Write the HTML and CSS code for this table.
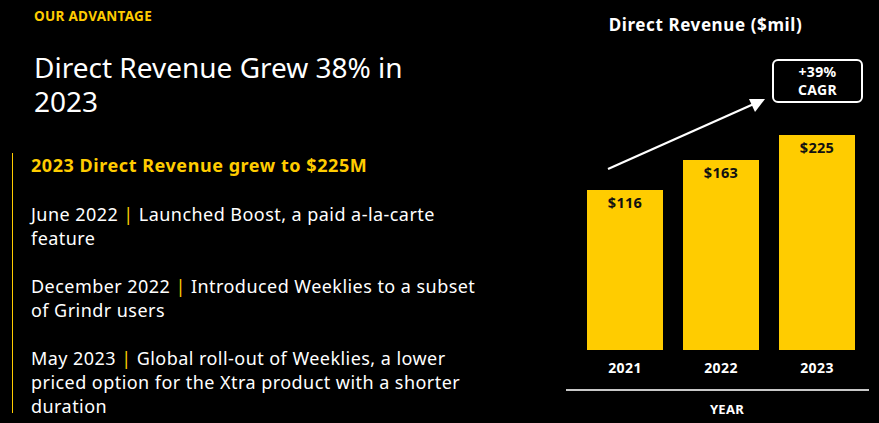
FILE: index.html
```html
<!DOCTYPE html>
<html>
<head>
<meta charset="utf-8">
<link rel="stylesheet" href="styles.css">
</head>
<body>
<div class="slide">
  <div class="left">
    <div class="eyebrow">OUR ADVANTAGE</div>
    <h1 class="title"><span class="tline">Direct Revenue Grew 38% in</span><span class="tline">2023</span></h1>
    <div class="points">
      <h2 class="lead">2023 Direct Revenue grew to $225M</h2>
      <p class="item">June 2022 <span class="sep">|</span> Launched Boost, a paid a-la-carte<br>feature</p>
      <p class="item">December 2022 <span class="sep">|</span> Introduced Weeklies to a subset<br>of Grindr users</p>
      <p class="item">May 2023 <span class="sep">|</span> Global roll-out of Weeklies, a lower<br>priced option for the Xtra product with a shorter<br>duration</p>
    </div>
  </div>
  <div class="chart">
    <div class="chart-title">Direct Revenue ($mil)</div>
    <div class="bars">
      <div class="bar" style="height:160px"><span>$116</span></div>
      <div class="bar" style="height:190px"><span>$163</span></div>
      <div class="bar" style="height:215px"><span>$225</span></div>
    </div>
    <div class="years">
      <div class="year">2021</div>
      <div class="year">2022</div>
      <div class="year">2023</div>
    </div>
    <div class="axis"></div>
    <div class="axis-label">YEAR</div>
    <svg class="arrow" width="170" height="80" viewBox="0 0 170 80">
      <line x1="2" y1="75" x2="150" y2="9" stroke="#fff" stroke-width="2.2"/>
      <polygon points="159,5 143,5 149,18" fill="#fff"/>
    </svg>
    <div class="cagr">+39%<br>CAGR</div>
  </div>
</div>
</body>
</html>
```

FILE: styles.css
```css
html, body {
  margin: 0;
  padding: 0;
  background: #000;
}
body {
  width: 879px;
  height: 423px;
  overflow: hidden;
  font-family: "Noto Sans", "Open Sans", sans-serif;
  color: #fff;
}
.slide {
  display: flex;
  width: 879px;
  height: 423px;
}
.left {
  width: 566px;
  flex: none;
}
.eyebrow {
  margin-top: 8px;
  padding-left: 34px;
  font-size: 13.5px;
  font-weight: 700;
  line-height: 16px;
  color: #ffcc00;
  letter-spacing: 0.3px;
}
.title {
  margin: 26px 0 0 0;
  padding-left: 34px;
  font-size: 28px;
  font-weight: 400;
  line-height: 34px;
  color: #fff;
}
.tline {
  display: block;
  height: 34px;
}
.points {
  margin: 35px 0 0 12px;
  border-left: 1px solid #ffcc00;
  padding-left: 18px;
  height: 260px;
}
.lead {
  margin: 0;
  font-size: 18px;
  font-weight: 700;
  line-height: 24px;
  letter-spacing: 0.55px;
  color: #ffcc00;
}
.item {
  margin: 25px 0 0 0;
  font-size: 18px;
  line-height: 24px;
  letter-spacing: 0.45px;
  color: #fff;
}
.item + .item {
  margin-top: 24px;
}
.sep {
  color: #ffcc00;
}
.chart {
  position: relative;
  width: 303px;
  flex: none;
}
.chart-title {
  margin-top: 15px;
  padding-right: 24px;
  text-align: center;
  font-size: 17px;
  font-weight: 700;
  line-height: 20px;
  letter-spacing: 0.6px;
}
.bars {
  display: flex;
  align-items: flex-end;
  gap: 20px;
  margin-left: 21px;
  height: 315px;
}
.bar {
  width: 76px;
  background: #ffcc00;
  text-align: center;
  color: #111;
  font-size: 14.5px;
  font-weight: 700;
  padding-top: 3px;
  box-sizing: border-box;
  line-height: 18px;
  letter-spacing: 0.3px;
}
.years {
  display: flex;
  gap: 20px;
  margin: 9px 0 0 21px;
}
.year {
  width: 76px;
  text-align: center;
  font-size: 14px;
  font-weight: 700;
  line-height: 18px;
  letter-spacing: 0.4px;
}
.axis {
  margin-top: 12px;
  height: 2px;
  background: #c8c8c8;
}
.axis-label {
  margin: 10px 0 0 21px;
  width: 268px;
  padding-left: 12px;
  box-sizing: border-box;
  text-align: center;
  font-size: 13px;
  font-weight: 700;
  line-height: 16px;
  letter-spacing: 0.3px;
}
.arrow {
  position: absolute;
  left: 40px;
  top: 94px;
}
.cagr {
  position: absolute;
  left: 206px;
  top: 59px;
  width: 91px;
  height: 44px;
  box-sizing: border-box;
  border: 2px solid #fff;
  border-radius: 6px;
  text-align: center;
  font-size: 14px;
  font-weight: 700;
  line-height: 18px;
  padding-top: 2px;
  letter-spacing: 0.3px;
}
```
